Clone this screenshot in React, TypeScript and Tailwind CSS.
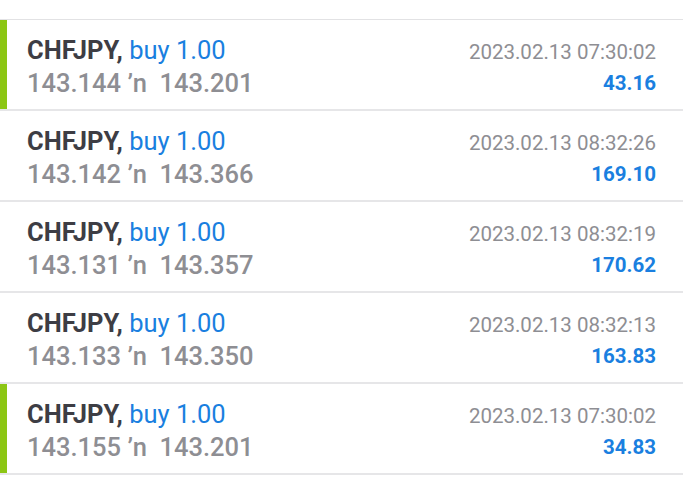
const rows = [
  { open: "143.144", close: "143.201", time: "2023.02.13 07:30:02", profit: "43.16", mark: true },
  { open: "143.142", close: "143.366", time: "2023.02.13 08:32:26", profit: "169.10", mark: false },
  { open: "143.131", close: "143.357", time: "2023.02.13 08:32:19", profit: "170.62", mark: false },
  { open: "143.133", close: "143.350", time: "2023.02.13 08:32:13", profit: "163.83", mark: false },
  { open: "143.155", close: "143.201", time: "2023.02.13 07:30:02", profit: "34.83", mark: true },
];

export default function App() {
  return (
    <div className="w-[683px] h-[486px] bg-white overflow-hidden font-['Roboto',sans-serif]">
      <div className="h-[19px]" />
      <div className="border-t border-[#e2e2e4]">
        {rows.map((r, i) => (
          <div key={i} className="relative h-[91px] border-b-2 border-[#e6e6e8] flex justify-between pl-[27px] pr-[27px]">
            {r.mark && <div className="absolute left-0 top-0 bottom-0 w-[7px] bg-[#8cc614]" />}
            <div className="pt-[14px]">
              <div className="text-[25.5px] leading-[33px]">
                <span className="font-bold text-[#3d3d44]">CHFJPY,</span>{" "}
                <span className="text-[#1a7fe0]">buy 1.00</span>
              </div>
              <div className="text-[25.5px] leading-[33px] font-medium text-[#8e8e93]">
                {r.open} <span>&#x2019;n</span>&nbsp;&nbsp;{r.close}
              </div>
            </div>
            <div className="pt-[18px] text-right">
              <div className="text-[20.5px] leading-[28px] text-[#8e8e93]">{r.time}</div>
              <div className="text-[20.5px] leading-[34px] font-bold text-[#1a7fe0]">{r.profit}</div>
            </div>
          </div>
        ))}
      </div>
    </div>
  );
}
